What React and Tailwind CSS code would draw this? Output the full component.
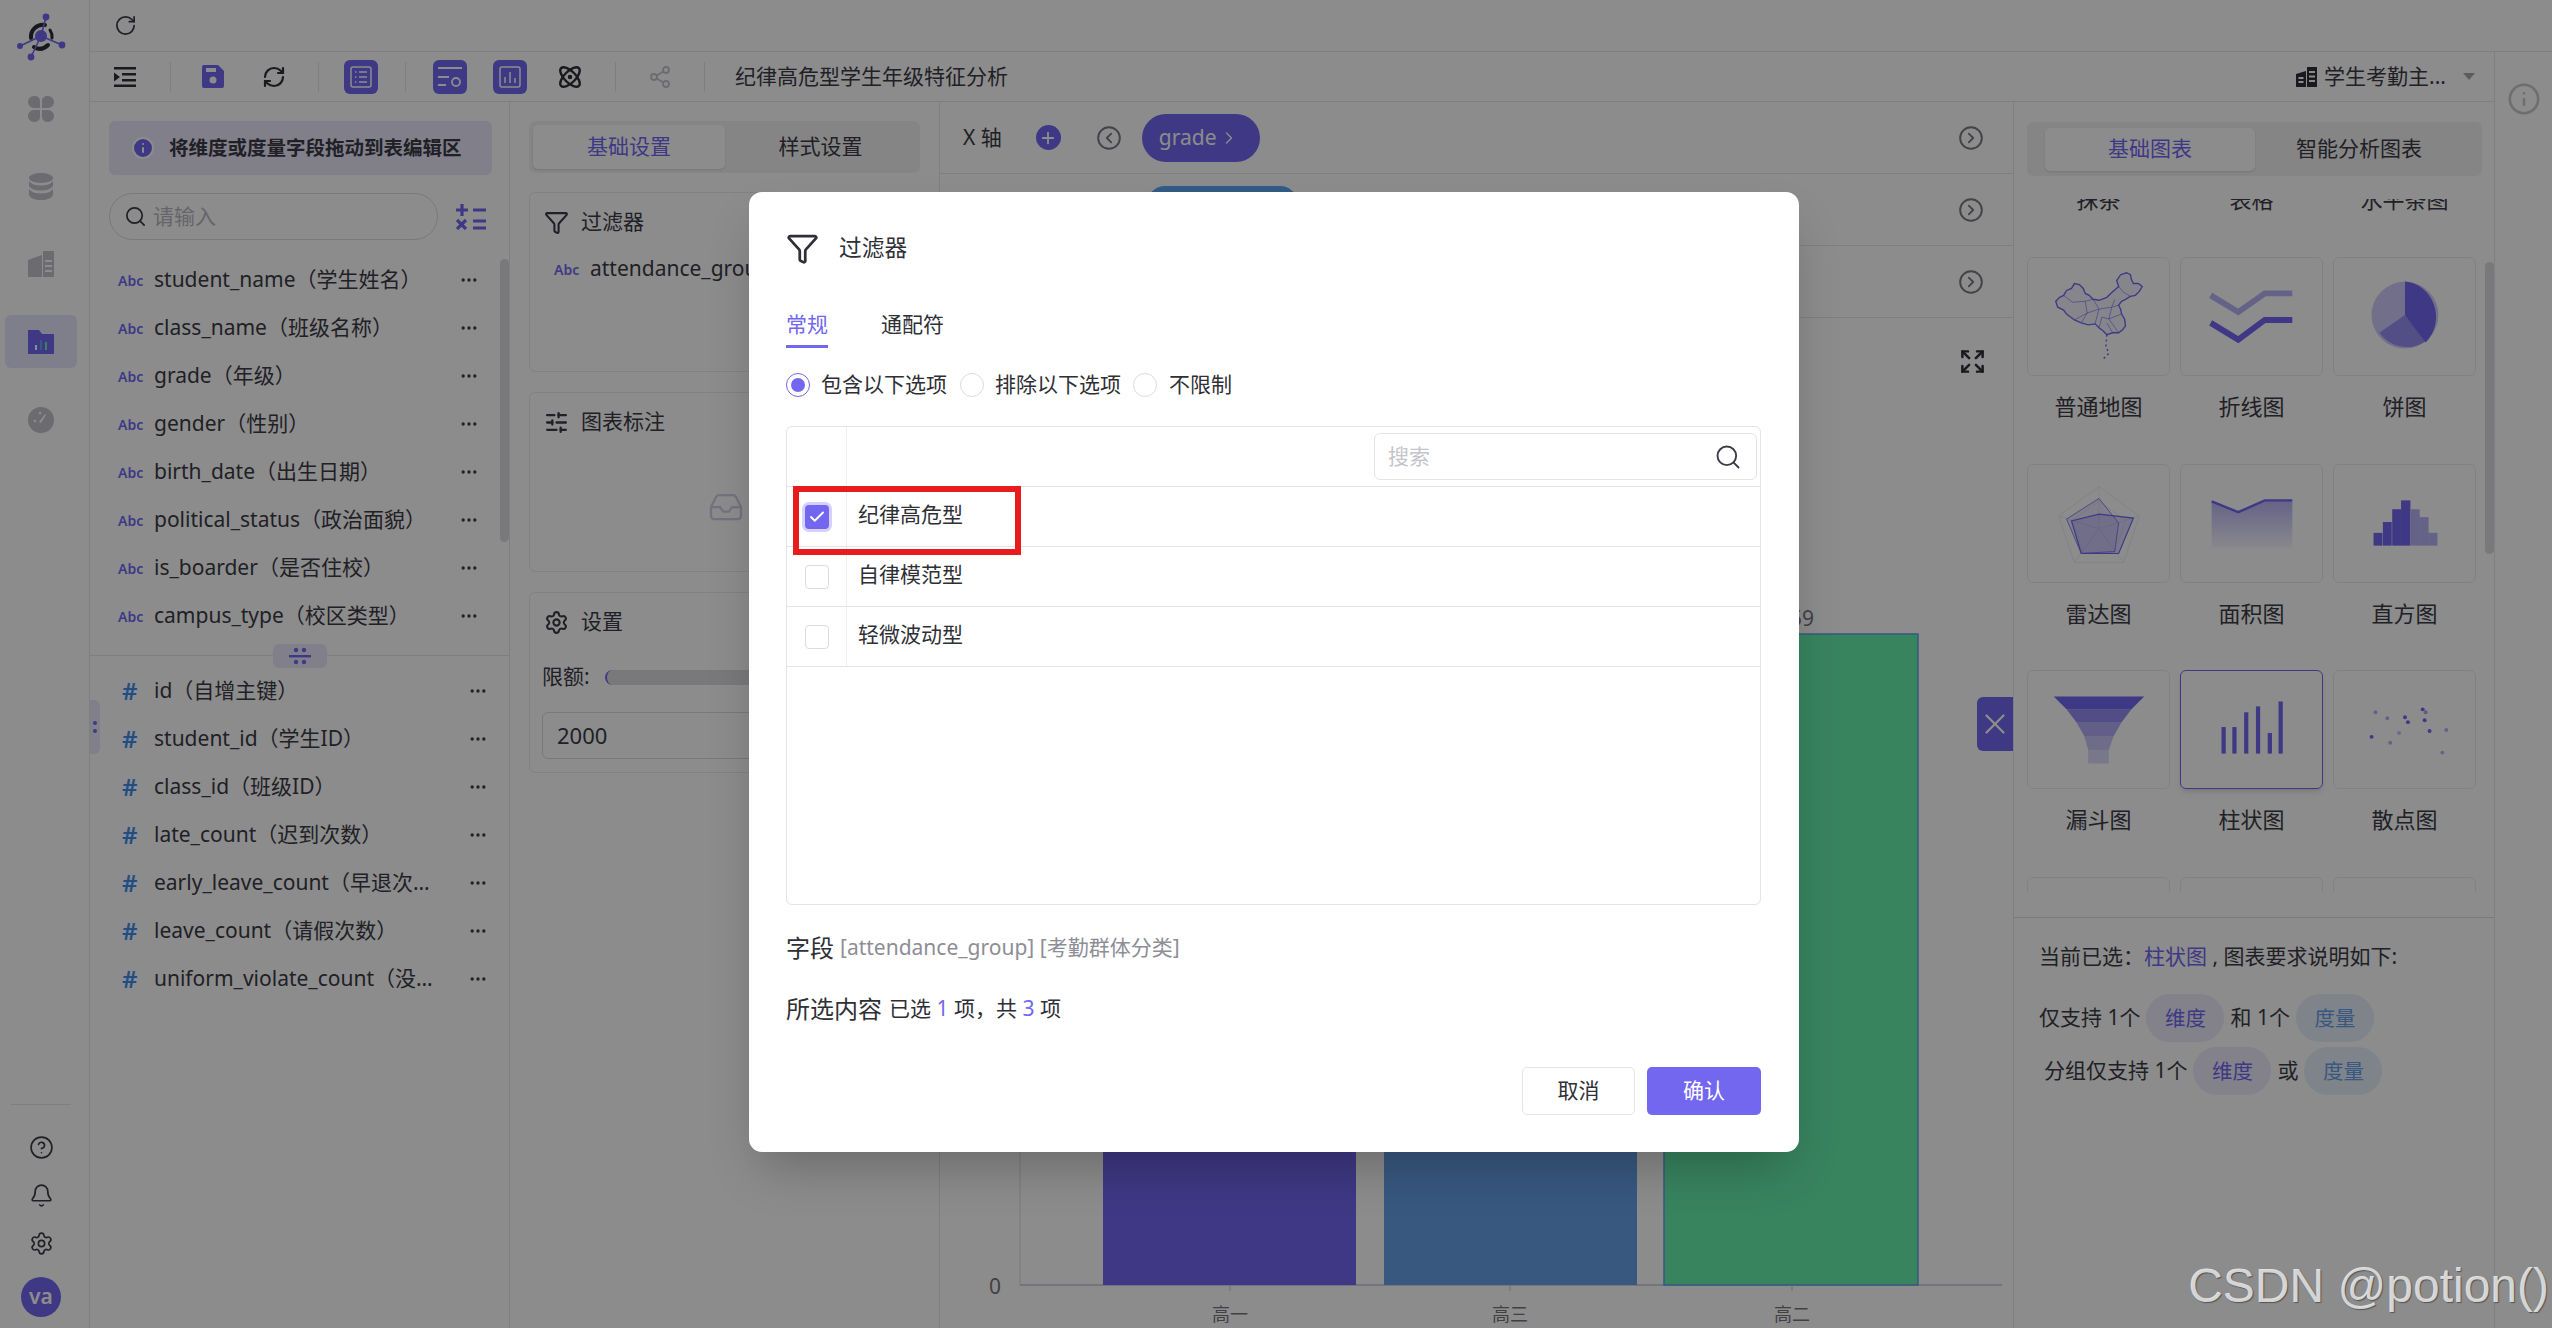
import React from "react";
import {
  RotateCw,
  RefreshCw,
  Funnel,
  Search,
  Plus,
  X,
  CircleHelp,
  Bell,
  Settings,
  Info,
  Expand,
  CircleChevronLeft,
  CircleChevronRight,
  ChevronRight,
  Atom,
  Share2,
  SlidersHorizontal,
  Check,
  Ellipsis,
  Inbox,
} from "lucide-react";

const dims = [
  "student_name（学生姓名）",
  "class_name（班级名称）",
  "grade（年级）",
  "gender（性别）",
  "birth_date（出生日期）",
  "political_status（政治面貌）",
  "is_boarder（是否住校）",
  "campus_type（校区类型）",
];

const measures = [
  "id（自增主键）",
  "student_id（学生ID）",
  "class_id（班级ID）",
  "late_count（迟到次数）",
  "early_leave_count（早退次数）",
  "leave_count（请假次数）",
  "uniform_violate_count（没穿校服次数）",
];

const Sep = ({ className }) => <div className={`w-px h-[30px] bg-[#e6e6ea] ${className}`} />;

const Logo = () => (
  <svg width="50" height="50" viewBox="0 0 50 50" fill="none">
    <path d="M15 27a12 12 0 0 1 14-13" stroke="#2c2c34" strokeWidth="4" strokeLinecap="round" />
    <path d="M18 36c5 3 10 2 14-2" stroke="#2c2c34" strokeWidth="4" strokeLinecap="round" />
    <path d="M36 27a12 12 0 0 0-2-8" stroke="#2c2c34" strokeWidth="3" strokeLinecap="round" />
    <circle cx="25" cy="25" r="6" fill="#7367f0" />
    <path d="M25 25L30 6M25 25L4 35M25 25L46 34M25 25L15 46" stroke="#7367f0" strokeWidth="1.6" />
    <circle cx="30" cy="6" r="3.4" fill="#7367f0" />
    <circle cx="4" cy="35" r="3" fill="#7367f0" />
    <circle cx="46" cy="34" r="3.4" fill="#7367f0" />
    <circle cx="15" cy="46" r="3.4" fill="#7367f0" />
  </svg>
);

const NavRail = () => (
  <div className="w-[90px] shrink-0 h-full border-r border-[#e8e8ec] flex flex-col items-center pr-[7px]">
    <div className="mt-[11px] h-[50px] flex items-center justify-center">
      <Logo />
    </div>
    <svg className="mt-[34px]" width="26" height="28" viewBox="0 0 26 28" fill="#c3c3cd">
      <path d="M6 1h1a5 5 0 0 1 5 5v7H6a6 6 0 0 1 0-12zM20 1a6 6 0 0 1 0 12h-6V6a5 5 0 0 1 5-5zM6 15h6v7a5 5 0 0 1-5 5H6a6 6 0 0 1 0-12zM14 15h6a6 6 0 0 1 0 12h-1a5 5 0 0 1-5-5z" />
    </svg>
    <svg className="mt-[50px]" width="26" height="28" viewBox="0 0 26 28" fill="#c3c3cd">
      <ellipse cx="13" cy="5" rx="12" ry="5" />
      <path d="M1 8c2 3 6 4.500 12 4.500S23 11 25 8v5c-2 3-6 4.500-12 4.500S3 16 1 13zM1 16c2 3 6 4.500 12 4.500S23 19 25 16v6c-1 3-6 5-12 5S2 25 1 22z" />
    </svg>
    <svg className="mt-[50px]" width="26" height="26" viewBox="0 0 26 26" fill="#c3c3cd">
      <path d="M0 9l14-5v22H0zM15 0h11v26H15z" />
      <path d="M17 9h7v2h-7zM17 14h7v2h-7zM17 19h7v2h-7z" fill="#fff" />
    </svg>
    <div className="mt-[38px] w-[72px] h-[53px] rounded-[6px] bg-[#e7e6fd] flex items-center justify-center">
      <svg width="26" height="24" viewBox="0 0 26 24">
        <path d="M0 0h11l3 4h12v20H0z" fill="#7367f0" />
        <path d="M7 15h2v5H7z" fill="#fff" />
        <path d="M12 10h2v10h-2z" fill="#66a0e9" />
        <path d="M17 12h2v8h-2z" fill="#66f0ad" />
      </svg>
    </div>
    <svg className="mt-[39px]" width="26" height="26" viewBox="0 0 26 26">
      <circle cx="13" cy="13" r="13" fill="#c3c3cd" />
      <path d="M11 15l6-8 1 1-5 8z" fill="#fff" />
      <circle cx="7" cy="14" r="1.300" fill="#fff" />
      <circle cx="12" cy="6" r="1.300" fill="#fff" />
    </svg>
    <div className="mt-auto w-[60px] border-t border-[#e8e8ec]" />
    <CircleHelp className="mt-[30px] text-[#3b3b46]" size={25} strokeWidth={1.6} />
    <Bell className="mt-[23px] text-[#3b3b46]" size={25} strokeWidth={1.6} />
    <Settings className="mt-[23px] text-[#3b3b46]" size={25} strokeWidth={1.6} />
    <div className="mt-[21px] mb-[11px] w-[40px] h-[40px] rounded-full bg-[#7367f0] text-white text-[21px] font-semibold flex items-center justify-center">
      va
    </div>
  </div>
);

const Toolbar = () => (
  <div className="h-[50px] border-b border-[#e8e8ec] flex items-center text-[#3b3b46]">
    <svg className="ml-[24px]" width="22" height="20" viewBox="0 0 22 20" fill="#2f2f38">
      <path d="M0 0h22v2.400H0zM8 6h14v2.400H8zM8 12h14v2.400H8zM0 17.600h22V20H0zM0 5.500l6 4.500-6 4.500z" />
    </svg>
    <Sep className="ml-[34px]" />
    <svg className="ml-[31px]" width="22" height="23" viewBox="0 0 22 23">
      <path d="M2 0h14l6 6v15a2 2 0 0 1-2 2H2a2 2 0 0 1-2-2V2a2 2 0 0 1 2-2z" fill="#7367f0" />
      <path d="M4 3h10v4H4z" fill="#fff" />
      <circle cx="11" cy="15" r="3.500" fill="#fff" />
    </svg>
    <RefreshCw className="ml-[38px] text-[#2f2f38]" size={24} strokeWidth={2.2} />
    <Sep className="ml-[32px]" />
    <div className="ml-[25px] w-[34px] h-[34px] rounded-[6px] bg-[#7367f0] flex items-center justify-center">
      <svg width="22" height="22" viewBox="0 0 22 22" fill="none" stroke="#fff" strokeWidth="1.500">
        <rect x="1" y="1" width="20" height="20" rx="2" />
        <path d="M5 6h1.500M9 6h8M5 11h1.500M9 11h8M5 16h1.500M9 16h8" />
      </svg>
    </div>
    <Sep className="ml-[27px]" />
    <div className="ml-[27px] w-[34px] h-[34px] rounded-[6px] bg-[#7367f0] flex items-center justify-center">
      <svg width="26" height="24" viewBox="0 0 26 24" fill="none" stroke="#fff" strokeWidth="1.800">
        <path d="M1 3h24M1 12h11M1 20h8" />
        <circle cx="19" cy="17" r="4" />
      </svg>
    </div>
    <div className="ml-[26px] w-[34px] h-[34px] rounded-[6px] bg-[#7367f0] flex items-center justify-center">
      <svg width="22" height="22" viewBox="0 0 22 22" fill="none" stroke="#fff" strokeWidth="1.500">
        <rect x="1" y="1" width="20" height="20" rx="2" />
        <path d="M6 11v6M11 6v11M16 12v5" />
      </svg>
    </div>
    <Atom className="ml-[30px] text-[#2f2f38]" size={26} strokeWidth={2.2} />
    <Sep className="ml-[32px]" />
    <Share2 className="ml-[32px] text-[#c5c5cc]" size={24} strokeWidth={1.8} />
    <Sep className="ml-[32px]" />
    <span className="ml-[30px] text-[21px] text-[#3b3b46]">纪律高危型学生年级特征分析</span>
    <div className="ml-auto flex items-center pr-[19px]">
      <svg width="21" height="20" viewBox="0 0 21 20" fill="#2f2f38">
        <path d="M0 7l10-3v16H0zM11 0h10v20H11z" />
        <path d="M13 4h6v2h-6zM13 8.500h6v2h-6zM13 13h6v2h-6zM2.500 10h5v2h-5zM2.500 14h5v2h-5z" fill="#fff" />
      </svg>
      <span className="ml-[7px] text-[21px] text-[#3b3b46]">学生考勤主...</span>
      <div className="ml-[17px] w-0 h-0 border-x-[6px] border-x-transparent border-t-[7px] border-t-[#a8a8b0]" />
    </div>
  </div>
);

const FieldList = () => (
  <div className="relative w-[420px] shrink-0 border-r border-[#e8e8ec] flex flex-col text-[#3b3b46]">
    <div className="mx-[19px] mt-[19px] w-[383px] h-[54px] rounded-[6px] bg-[#e9e8fc] flex items-center pl-[22px]">
      <Info className="text-white fill-[#7367f0]" size={24} strokeWidth={2} />
      <span className="ml-[14px] text-[19.5px] font-bold text-[#3b3b46]">将维度或度量字段拖动到表编辑区</span>
    </div>
    <div className="mx-[19px] mt-[18px] flex items-center">
      <div className="w-[329px] h-[47px] rounded-full border border-[#dcdce0] flex items-center pl-[14px]">
        <Search className="text-[#3b3b46]" size={23} strokeWidth={1.8} />
        <span className="ml-[6px] text-[21px] text-[#b9b9c0]">请输入</span>
      </div>
      <svg className="ml-[18px]" width="30" height="26" viewBox="0 0 30 26" stroke="#7367f0" strokeWidth="3.200">
        <path d="M0 6h12M6 0v12M17 6h13M1 16l9 9M10 16l-9 9M17 17h13M17 24h13" />
      </svg>
    </div>
    <div className="mt-[16px] h-[384px] flex flex-col">
      {dims.map((name) => (
        <div key={name} className="h-[48px] shrink-0 flex items-center pl-[28px] pr-[30px]">
          <span className="w-[36px] shrink-0 text-[14px] font-semibold text-[#7367f0]">Abc</span>
          <span className="w-[284px] truncate text-[21px]">{name}</span>
          <Ellipsis className="ml-auto text-[#3b3b46]" size={20} />
        </div>
      ))}
    </div>
    <div className="relative mt-[15px] border-t border-[#e8e8ec]">
      <div className="absolute left-[183px] top-[-12px] w-[54px] h-[24px] rounded-[6px] bg-[#e9e8fc] flex items-center justify-center">
        <svg width="22" height="18" viewBox="0 0 22 18" fill="#7367f0">
          <circle cx="7" cy="3" r="2.200" />
          <circle cx="15" cy="3" r="2.200" />
          <rect x="0" y="8" width="22" height="2.400" />
          <circle cx="7" cy="15" r="2.200" />
          <circle cx="15" cy="15" r="2.200" />
        </svg>
      </div>
    </div>
    <div className="mt-[11px] flex flex-col">
      {measures.map((name) => (
        <div key={name} className="h-[48px] shrink-0 flex items-center pl-[32px] pr-[21px]">
          <span className="w-[32px] shrink-0 text-[24px] font-semibold text-[#3f8cf0]">#</span>
          <span className="w-[284px] truncate text-[21px]">{name}</span>
          <Ellipsis className="ml-auto text-[#3b3b46]" size={20} />
        </div>
      ))}
    </div>
    <div className="absolute right-0 top-[157px] w-[9px] h-[283px] rounded-full bg-[#dcdce0]" />
    <div className="absolute left-0 top-[598px] w-[10px] h-[54px] rounded-r-[6px] bg-[#e9e8fc] flex flex-col items-center justify-center gap-[4px]">
      <div className="w-[4px] h-[4px] rounded-full bg-[#7367f0]" />
      <div className="w-[4px] h-[4px] rounded-full bg-[#7367f0]" />
    </div>
  </div>
);

const SettingsPanel = () => (
  <div className="w-[430px] shrink-0 border-r border-[#e8e8ec] flex flex-col px-[19px] text-[#3b3b46]">
    <div className="mt-[19px] h-[52px] rounded-[6px] bg-[#f3f3f3] flex items-center px-[4px]">
      <div className="w-[192px] h-[44px] rounded-[5px] bg-white shadow text-[#7367f0] text-[21px] flex items-center justify-center">
        基础设置
      </div>
      <div className="flex-1 text-center text-[21px]">样式设置</div>
    </div>
    <div className="mt-[19px] h-[180px] rounded-[6px] border border-[#ececf0] pl-[14px] pt-[15px]">
      <div className="flex items-center h-[28px]">
        <Funnel size={25} strokeWidth={2} />
        <span className="ml-[12px] text-[21px]">过滤器</span>
      </div>
      <div className="mt-[13px] h-[40px] flex items-center pl-[10px] whitespace-nowrap">
        <span className="w-[36px] shrink-0 text-[14px] font-semibold text-[#7367f0]">Abc</span>
        <span className="text-[21px]">attendance_group（考勤群体分类）</span>
      </div>
    </div>
    <div className="relative mt-[20px] h-[180px] rounded-[6px] border border-[#ececf0] pl-[14px] pt-[15px]">
      <div className="flex items-center h-[28px]">
        <SlidersHorizontal size={25} strokeWidth={2.2} />
        <span className="ml-[12px] text-[21px]">图表标注</span>
      </div>
      <Inbox className="absolute left-[178px] top-[96px] text-[#d0d0ea]" size={36} strokeWidth={1.5} />
    </div>
    <div className="mt-[20px] h-[181px] rounded-[6px] border border-[#ececf0] pl-[12px] pt-[15px]">
      <div className="flex items-center h-[28px] pl-[2px]">
        <Settings size={25} strokeWidth={2} />
        <span className="ml-[12px] text-[21px]">设置</span>
      </div>
      <div className="mt-[25px] flex items-center h-[32px]">
        <span className="text-[21px] w-[63px]">限额:</span>
        <div className="w-[300px] h-[15px] rounded-full bg-[#dcdce2] border-l-2 border-[#7367f0]" />
      </div>
      <div className="mt-[19px] w-[360px] h-[47px] rounded-[6px] border border-[#dcdce0] flex items-center pl-[14px] text-[22px]">
        2000
      </div>
    </div>
  </div>
);

const ChartArea = () => (
  <div className="relative w-[1074px] shrink-0 border-r border-[#e8e8ec] flex flex-col text-[#3b3b46]">
    <div className="h-[72px] border-b border-[#e8e8ec] flex items-center pl-[23px] pr-[29px]">
      <span className="text-[21px] whitespace-pre">X 轴</span>
      <div className="ml-[34px] w-[25px] h-[25px] rounded-full bg-[#7367f0] flex items-center justify-center">
        <Plus className="text-white" size={18} strokeWidth={2.5} />
      </div>
      <CircleChevronLeft className="ml-[35px] text-[#7b7b84]" size={26} strokeWidth={1.8} />
      <div className="ml-[20px] w-[118px] h-[48px] rounded-[24px] bg-[#7367f0] text-white text-[21px] flex items-center pl-[17px]">
        grade
        <ChevronRight className="ml-[2px]" size={20} strokeWidth={1.6} />
      </div>
      <CircleChevronRight className="ml-auto text-[#7b7b84]" size={26} strokeWidth={1.8} />
    </div>
    <div className="h-[72px] border-b border-[#e8e8ec] flex items-center pl-[207px] pr-[29px]">
      <div className="w-[151px] h-[48px] rounded-[18px] bg-[#5ba6f5]" />
      <CircleChevronRight className="ml-auto text-[#7b7b84]" size={26} strokeWidth={1.8} />
    </div>
    <div className="h-[72px] border-b border-[#e8e8ec] flex items-center justify-end pr-[29px]">
      <CircleChevronRight className="text-[#7b7b84]" size={26} strokeWidth={1.8} />
    </div>
    <svg className="block" width="1073" height="1010" viewBox="940 318 1073 1010">
      <line x1="1020" y1="620" x2="1020" y2="1285" stroke="#dcdce2" />
      <line x1="1020" y1="1285" x2="2002" y2="1285" stroke="#c8c8d0" strokeWidth="1.500" />
      <rect x="1103" y="760" width="253" height="525" fill="#7367f0" />
      <rect x="1384" y="700" width="253" height="585" fill="#66a0e9" />
      <rect x="1664" y="634" width="254" height="651" fill="#66f0ad" stroke="#66a0e9" strokeWidth="1.500" />
      <path d="M1230 1285v6M1510 1285v6M1792 1285v6" stroke="#c8c8d0" />
      <text x="1778" y="626" fontSize="21" fill="#77777f">
        559
      </text>
      <text x="995" y="1294" fontSize="21" fill="#77777f" textAnchor="middle">
        0
      </text>
      <text x="1230" y="1321" fontSize="18" fill="#77777f" textAnchor="middle">
        高一
      </text>
      <text x="1510" y="1321" fontSize="18" fill="#77777f" textAnchor="middle">
        高三
      </text>
      <text x="1792" y="1321" fontSize="18" fill="#77777f" textAnchor="middle">
        高二
      </text>
    </svg>
    <Expand className="absolute left-[1019px] top-[246px] text-[#2f2f38]" size={27} strokeWidth={2.2} />
    <div className="absolute right-0 top-[595px] w-[36px] h-[54px] rounded-l-[6px] bg-[#7367f0] flex items-center justify-center">
      <X className="text-white" size={34} strokeWidth={1.6} />
    </div>
  </div>
);

// chart thumbnails, drawn on the card's 143x119 box
const MapThumb = () => (
  <svg width="141" height="117" viewBox="0 0 143 119" fill="none" stroke="#7367f0">
    <path
      d="M28 44L32 40L36 38L39 33L44 31L47 26L52 27L56 31L58 36L62 38L66 42L72 43L80 40L85 35L92 29L90 23L94 17L100 15L104 17L105 22L107 26L112 26L116 29L113 34L109 38L104 39L99 42L95 44L92 48L94 52L95 57L98 62L99 69L96 73L92 76L86 76L80 78L76 74L72 71L68 67L61 68L54 66L47 63L39 57L36 53L30 50z"
      strokeWidth="1.400"
      fill="#f4f3ff"
    />
    <path
      d="M36 38L45 45L58 44L66 42M58 44L60 56L54 66M66 42L72 52L68 67M72 52L85 50L92 48M85 50L82 62L92 76M75 60L82 62M47 63L60 56M60 56L72 52M82 62L95 57M85 50L88 42M92 29L97 35L104 39M75 60L72 71M80 66L86 76"
      strokeWidth="0.800"
      opacity="0.75"
    />
    <path d="M80 78L79 90L82 97L76 103" strokeWidth="1.500" strokeDasharray="2 3" />
  </svg>
);

const LineThumb = () => (
  <svg width="141" height="117" viewBox="0 0 143 119" fill="none" stroke="#7367f0" strokeWidth="6">
    <path d="M30 38L58 55L85 36H113" opacity="0.5" />
    <path d="M30 66L58 83L85 63H113" />
  </svg>
);

const PieThumb = () => (
  <svg width="141" height="117" viewBox="0 0 143 119">
    <circle cx="72" cy="58" r="34" fill="#7367f0" opacity="0.35" />
    <path d="M72 58L46 76A34 34 0 0 0 94 84z" fill="#7367f0" opacity="0.6" />
    <path d="M72 24A34 36 0 0 1 93 86L72 58z" fill="#7367f0" />
  </svg>
);

const RadarThumb = () => (
  <svg width="141" height="117" viewBox="0 0 143 119" fill="none">
    <path d="M72 22L113 52L97 99H47L31 52z" stroke="#eeeef2" />
    <path d="M72 37L99 56L88 89H56L45 56zM72 65V22M72 65L113 52M72 65L97 99M72 65L47 99M72 65L31 52" stroke="#eeeef2" />
    <path d="M72 34L92 59L88 88L54 90L39 55z" stroke="#7367f0" strokeWidth="0.800" fill="#7367f0" fillOpacity="0.15" />
    <path d="M72 50L107 54L92 90H54L44 57z" stroke="#7367f0" strokeWidth="1.200" fill="#7367f0" fillOpacity="0.25" />
  </svg>
);

const AreaThumb = () => (
  <svg width="141" height="117" viewBox="0 0 143 119" fill="none">
    <defs>
      <linearGradient id="areaFill" x1="0" y1="0" x2="0" y2="1">
        <stop offset="0" stopColor="#7367f0" stopOpacity="0.5" />
        <stop offset="1" stopColor="#7367f0" stopOpacity="0.05" />
      </linearGradient>
    </defs>
    <path d="M31 37L58 48L85 36H113V84H31z" fill="url(#areaFill)" />
    <path d="M31 37L58 48L85 36H113" stroke="#7367f0" strokeWidth="2.500" />
  </svg>
);

const HistThumb = () => (
  <svg width="141" height="117" viewBox="0 0 143 119" fill="#7367f0">
    <rect x="40" y="69" width="9" height="13" />
    <rect x="49.500" y="58" width="9" height="24" />
    <rect x="59" y="45" width="9" height="37" />
    <rect x="68" y="36" width="9.500" height="46" />
    <rect x="78" y="45" width="9" height="37" opacity="0.5" />
    <rect x="87" y="53" width="9" height="29" opacity="0.5" />
    <rect x="96" y="69" width="9" height="13" opacity="0.5" />
  </svg>
);

const FunnelThumb = () => (
  <svg width="141" height="117" viewBox="0 0 143 119" fill="#7367f0">
    <path d="M26 26H118L105 39H39z" />
    <path d="M39 39H105L95 52H49z" opacity="0.75" />
    <path d="M49 52H95L87 66H57z" opacity="0.55" />
    <path d="M57 66H87L82 80H61z" opacity="0.38" />
    <path d="M61 80H82V94H61z" opacity="0.25" />
  </svg>
);

const BarThumb = () => (
  <svg width="141" height="117" viewBox="0 0 143 119" fill="#7367f0">
    <rect x="41" y="57" width="4.300" height="27" />
    <rect x="52" y="57" width="4.300" height="27" />
    <rect x="64" y="42" width="4.300" height="42" />
    <rect x="76" y="36" width="4.300" height="48" />
    <rect x="88" y="63" width="4.300" height="21" />
    <rect x="99" y="31" width="4.300" height="53" />
  </svg>
);

const scatter = [
  [42, 42, 0.5], [54, 48, 0.5], [72, 47, 1], [75, 52, 1], [90, 39, 1], [93, 42, 0.6],
  [92, 50, 1], [97, 61, 1], [114, 60, 0.5], [66, 63, 0.4], [38, 67, 1], [57, 73, 0.5], [110, 83, 0.5],
];

const ScatterThumb = () => (
  <svg width="141" height="117" viewBox="0 0 143 119" fill="#7367f0">
    {scatter.map(([x, y, o]) => (
      <circle key={`${x}-${y}`} cx={x} cy={y} r="2" opacity={o} />
    ))}
  </svg>
);

const chartRows = [
  [
    { name: "普通地图", Thumb: MapThumb },
    { name: "折线图", Thumb: LineThumb },
    { name: "饼图", Thumb: PieThumb },
  ],
  [
    { name: "雷达图", Thumb: RadarThumb },
    { name: "面积图", Thumb: AreaThumb },
    { name: "直方图", Thumb: HistThumb },
  ],
  [
    { name: "漏斗图", Thumb: FunnelThumb },
    { name: "柱状图", Thumb: BarThumb, active: true },
    { name: "散点图", Thumb: ScatterThumb },
  ],
];

const Tag = ({ children, blue }) => (
  <span
    className={`w-[78px] h-[48px] rounded-full flex items-center justify-center text-[20.500px] ${
      blue ? "bg-[#e8f1fc] text-[#66a0e9]" : "bg-[#eeedfd] text-[#7367f0]"
    }`}
  >
    {children}
  </span>
);

const ChartPicker = () => (
  <div className="relative w-[480px] shrink-0 flex flex-col text-[#3b3b46]">
    <div className="mx-[13px] mt-[20px] w-[455px] h-[54px] rounded-[6px] bg-[#f3f3f3] flex items-center pl-[18px]">
      <div className="w-[210px] h-[43px] rounded-[5px] bg-white shadow text-[#7367f0] text-[21px] flex items-center justify-center">
        基础图表
      </div>
      <div className="w-[208px] text-center text-[21px]">智能分析图表</div>
    </div>
    <div className="mt-[23px] h-[693px] overflow-hidden pl-[13px]">
      <div className="mt-[-16px] grid grid-cols-[143px_143px_143px] gap-x-[10px] h-[30px] text-[22px] text-center items-center">
        <span>抹茶</span>
        <span>表格</span>
        <span>水平条图</span>
      </div>
      <div className="mt-[44px] flex flex-col gap-y-[40.500px]">
        {chartRows.map((row) => (
          <div key={row[0].name} className="grid grid-cols-[143px_143px_143px] gap-x-[10px]">
            {row.map(({ name, Thumb, active }) => (
              <div key={name} className="flex flex-col items-center">
                <div
                  className={`w-[143px] h-[119px] rounded-[6px] border flex items-center justify-center ${
                    active ? "border-[#7367f0] shadow-md" : "border-[#ececf0]"
                  }`}
                >
                  <Thumb />
                </div>
                <span className="mt-[15px] mb-[2px] h-[30px] leading-[30px] text-[22px]">{name}</span>
              </div>
            ))}
          </div>
        ))}
        <div className="grid grid-cols-[143px_143px_143px] gap-x-[10px]">
          <div className="h-[119px] rounded-[6px] border border-[#ececf0]" />
          <div className="h-[119px] rounded-[6px] border border-[#ececf0]" />
          <div className="h-[119px] rounded-[6px] border border-[#ececf0]" />
        </div>
      </div>
    </div>
    <div className="mt-[25px] border-t border-[#e0e0e4] pl-[25px] text-[21px]">
      <div className="mt-[25px] h-[26px] leading-[26px]">
        当前已选：<span className="text-[#7367f0]">柱状图</span> , 图表要求说明如下:
      </div>
      <div className="mt-[25px] flex items-center gap-[6px] h-[48px]">
        <span>仅支持 1个</span>
        <Tag>维度</Tag>
        <span>和 1个</span>
        <Tag blue>度量</Tag>
      </div>
      <div className="mt-[5px] flex items-center gap-[6px] h-[48px] pl-[5px]">
        <span>分组仅支持 1个</span>
        <Tag>维度</Tag>
        <span>或</span>
        <Tag blue>度量</Tag>
      </div>
    </div>
    <div className="absolute right-0 top-[160px] w-[9px] h-[292px] rounded-full bg-[#dcdce0]" />
  </div>
);

const options = ["纪律高危型", "自律模范型", "轻微波动型"];

const Radio = ({ on }) => (
  <span
    className={`w-[24px] h-[24px] rounded-full border flex items-center justify-center ${
      on ? "border-[#7367f0]" : "border-[#dcdce0]"
    }`}
  >
    {on && <span className="w-[14px] h-[14px] rounded-full bg-[#7367f0]" />}
  </span>
);

const FilterDialog = () => (
  <div className="absolute left-[749px] top-[192px] w-[1050px] h-[960px] rounded-[13px] bg-white shadow-2xl flex flex-col pl-[37px] pr-[36px] text-[#2f2f36]">
    <div className="mt-[42px] h-[28px] flex items-center">
      <Funnel className="text-[#2f2f36]" size={33} strokeWidth={2} />
      <span className="ml-[20px] text-[22.750px]">过滤器</span>
    </div>
    <div className="mt-[47px] flex text-[21px] h-[39px]">
      <div className="w-[42px] border-b-[3px] border-[#7367f0] text-[#7367f0] whitespace-nowrap leading-[30px]">常规</div>
      <div className="ml-[53px] leading-[30px]">通配符</div>
    </div>
    <div className="mt-[25px] h-[24px] flex items-center text-[21px]">
      <Radio on />
      <span className="ml-[11px]">包含以下选项</span>
      <span className="ml-[13px]"><Radio /></span>
      <span className="ml-[11px]">排除以下选项</span>
      <span className="ml-[12px]"><Radio /></span>
      <span className="ml-[12px]">不限制</span>
    </div>
    <div className="mt-[29px] w-[975px] h-[479px] rounded-[6px] border border-[#e4e4e8] flex flex-col">
      <div className="h-[60px] shrink-0 flex border-b border-[#e4e4e8]">
        <div className="w-[60px] border-r border-[#eeeef0]" />
        <div className="flex-1 flex justify-end items-center pr-[3px]">
          <div className="w-[383px] h-[47px] rounded-[6px] border border-[#e4e4e8] flex items-center pl-[13px] pr-[14px] text-[21px] text-[#c4c4ca]">
            搜索
            <Search className="ml-auto text-[#3b3b46]" size={28} strokeWidth={1.6} />
          </div>
        </div>
      </div>
      {options.map((name, i) => (
        <div key={name} className="h-[60px] shrink-0 flex border-b border-[#e4e4e8]">
          <div className="w-[60px] shrink-0 border-r border-[#eeeef0] flex items-center justify-center">
            {i === 0 ? (
              <span className="w-[24px] h-[24px] rounded-[4px] bg-[#7367f0] ring-[3px] ring-[#d5d1fa] flex items-center justify-center">
                <Check className="text-white" size={18} strokeWidth={2.5} />
              </span>
            ) : (
              <span className="w-[24px] h-[24px] rounded-[4px] border border-[#dcdce0]" />
            )}
          </div>
          <div className="pl-[11px] flex items-center text-[21px] pb-[3px]">{name}</div>
        </div>
      ))}
    </div>
    <div className="mt-[29px] h-[28px] flex items-center whitespace-nowrap">
      <span className="text-[24px]">字段</span>
      <span className="ml-[6px] text-[21px] text-[#8d8d96]">[attendance_group] [考勤群体分类]</span>
    </div>
    <div className="mt-[33px] h-[28px] flex items-center whitespace-pre">
      <span className="text-[24px]">所选内容</span>
      <span className="ml-[7px] text-[21px]">
        已选 <span className="text-[#7367f0]">1</span> 项，共 <span className="text-[#7367f0]">3</span> 项
      </span>
    </div>
    <div className="mt-[44px] w-[975px] flex justify-end gap-[12px] text-[21px]">
      <div className="w-[113px] h-[48px] rounded-[5px] border border-[#e4e4e8] flex items-center justify-center">取消</div>
      <div className="w-[114px] h-[48px] rounded-[5px] bg-[#7367f0] text-white flex items-center justify-center">确认</div>
    </div>
    <div className="absolute left-[44px] top-[294px] w-[228px] h-[69px] border-[6px] border-[#e81c1c]" />
  </div>
);

export default function App() {
  return (
    <div className="relative w-[2552px] h-[1328px] overflow-hidden bg-white flex font-['Noto_Sans','Noto_Sans_CJK_SC',sans-serif]">
      <NavRail />
      <div className="flex-1 flex flex-col min-w-0">
        <div className="h-[52px] shrink-0 border-b border-[#e8e8ec] flex items-center pl-[24px]">
          <RotateCw className="text-[#3b3b46]" size={23} strokeWidth={1.8} />
        </div>
        <div className="flex flex-1 min-h-0">
          <div className="w-[2404px] shrink-0 flex flex-col">
            <Toolbar />
            <div className="flex flex-1 min-h-0">
              <FieldList />
              <SettingsPanel />
              <ChartArea />
              <ChartPicker />
            </div>
          </div>
          <div className="flex-1 border-l border-[#e8e8ec] flex justify-center pt-[30px]">
            <Info className="text-[#c8c8ce]" size={34} strokeWidth={1.8} />
          </div>
        </div>
      </div>
      <div className="absolute inset-0 bg-black/45">
        <FilterDialog />
      </div>
      <div className="absolute right-[3px] bottom-[14px] text-[48px] leading-[56px] text-white/75 font-['Liberation_Sans',sans-serif] [text-shadow:1px_1px_1px_#555]">
        CSDN @potion()
      </div>
    </div>
  );
}
